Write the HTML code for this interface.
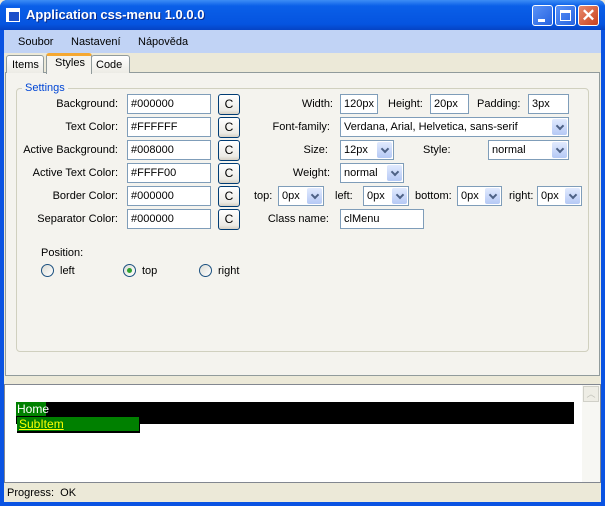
<!DOCTYPE html><html><head><style>
*{margin:0;padding:0;box-sizing:border-box}
body{width:605px;height:506px;position:relative;overflow:hidden;font-family:"Liberation Sans",Tahoma,sans-serif;font-size:11px;color:#000;background:#ece9d8}
.a{position:absolute}
.lbl{position:absolute;white-space:nowrap}
.r{text-align:right}
.in{position:absolute;height:20px;border:1px solid #7f9db9;background:#fff;padding:3px 0 0 3px;white-space:nowrap}
.btn{position:absolute;width:22px;height:21px;border:1px solid #003c74;border-radius:3px;background:linear-gradient(#fff,#ecebe6 80%,#d6d0c5);text-align:center;line-height:19px;font-size:12px}
.sel{position:absolute;height:20px;border:1px solid #7f9db9;background:#fff;padding:3px 0 0 3px;white-space:nowrap}
.sel:after{content:"";position:absolute;right:1px;top:1px;width:15px;height:16px;background:linear-gradient(#e1eafe,#b5c9f5);border-radius:2px}
.sel i{position:absolute;right:5px;top:5px;width:6px;height:6px;border-right:2px solid #4d6185;border-bottom:2px solid #4d6185;transform:rotate(45deg);z-index:2}
.rad{position:absolute;width:13px;height:13px;border:1px solid #1c5180;border-radius:50%;background:linear-gradient(135deg,#dcdcd5,#fff)}
</style></head><body>
<div class="a" style="left:0;top:0;width:605px;height:506px;background:#0a53e2;border-radius:7px 7px 0 0"></div>
<div class="a" style="left:0;top:0;width:605px;height:30px;border-radius:7px 7px 0 0;background:linear-gradient(#3d8df5,#0a5fe8 20%,#0554e0 80%,#0543c4)"></div>
<div class="a" style="left:6px;top:8px;width:14px;height:14px;background:#fff;border:1px solid #fff"><div class="a" style="left:2px;top:3px;width:10px;height:9px;background:#1c4fc9"></div><div class="a" style="left:0;top:3px;width:2px;height:9px;background:#fff"></div></div>
<div class="lbl" style="left:26px;top:7px;color:#fff;font-weight:bold;font-size:13px;text-shadow:1px 1px #0a2a8a">Application css-menu 1.0.0.0</div>
<div class="a" style="left:532px;top:5px;width:21px;height:21px;border:1px solid #fff;border-radius:3px;background:linear-gradient(135deg,#5a92f7,#2663e0)"><div class="a" style="left:5px;top:13px;width:7px;height:3px;background:#fff"></div></div>
<div class="a" style="left:555px;top:5px;width:21px;height:21px;border:1px solid #fff;border-radius:3px;background:linear-gradient(135deg,#5a92f7,#2663e0)"><div class="a" style="left:4px;top:4px;width:11px;height:11px;border:1px solid #fff;border-top-width:3px"></div></div>
<div class="a" style="left:578px;top:5px;width:21px;height:21px;border:1px solid #fff;border-radius:3px;background:linear-gradient(135deg,#e88a6d,#c9411d);color:#fff;font-size:17px;font-weight:bold;text-align:center;line-height:19px">✕</div>
<div class="a" style="left:4px;top:30px;width:597px;height:472px;background:#ece9d8"></div>
<div class="a" style="left:4px;top:30px;width:597px;height:23px;background:#c1d3f5"></div>
<div class="lbl" style="left:18px;top:36px">Soubor</div>
<div class="lbl" style="left:71px;top:36px">Nastavení</div>
<div class="lbl" style="left:138px;top:36px">Nápověda</div>
<!-- tab panel -->
<div class="a" style="left:5px;top:72px;width:595px;height:304px;background:#f4f3ee;border:1px solid #919b9c"></div>
<div class="a" style="left:6px;top:55px;width:38px;height:18px;border:1px solid #919b9c;border-bottom:none;background:linear-gradient(#fff,#ecebe5);border-radius:3px 3px 0 0"></div>
<div class="lbl" style="left:12px;top:59px">Items</div>
<div class="a" style="left:91px;top:55px;width:39px;height:18px;border:1px solid #919b9c;border-bottom:none;background:linear-gradient(#fff,#ecebe5);border-radius:3px 3px 0 0"></div>
<div class="lbl" style="left:96px;top:59px">Code</div>
<div class="a" style="left:46px;top:53px;width:46px;height:21px;border:1px solid #919b9c;border-bottom:none;border-top:3px solid #f5a831;background:#f4f3ee;border-radius:3px 3px 0 0"></div>
<div class="lbl" style="left:55px;top:57px">Styles</div>
<!-- groupbox -->
<div class="a" style="left:16px;top:88px;width:573px;height:264px;border:1px solid #d0d0bf;border-radius:4px"></div>
<div class="lbl" style="left:22px;top:82px;color:#0046d5;background:#f4f3ee;padding:0 3px">Settings</div>
<div class="lbl r" style="left:0;width:118px;top:98px">Background:</div>
<div class="lbl r" style="left:0;width:118px;top:121px">Text Color:</div>
<div class="lbl r" style="left:0;width:118px;top:144px">Active Background:</div>
<div class="lbl r" style="left:0;width:118px;top:167px">Active Text Color:</div>
<div class="lbl r" style="left:0;width:118px;top:190px">Border Color:</div>
<div class="lbl r" style="left:0;width:118px;top:213px">Separator Color:</div>
<div class="in" style="left:127px;top:94px;width:84px">#000000</div>
<div class="in" style="left:127px;top:117px;width:84px">#FFFFFF</div>
<div class="in" style="left:127px;top:140px;width:84px">#008000</div>
<div class="in" style="left:127px;top:163px;width:84px">#FFFF00</div>
<div class="in" style="left:127px;top:186px;width:84px">#000000</div>
<div class="in" style="left:127px;top:209px;width:84px">#000000</div>
<div class="btn" style="left:218px;top:94px">C</div>
<div class="btn" style="left:218px;top:117px">C</div>
<div class="btn" style="left:218px;top:140px">C</div>
<div class="btn" style="left:218px;top:163px">C</div>
<div class="btn" style="left:218px;top:186px">C</div>
<div class="btn" style="left:218px;top:209px">C</div>
<div class="lbl r" style="left:200px;width:133px;top:98px">Width:</div>
<div class="in" style="left:340px;top:94px;width:38px">120px</div>
<div class="lbl" style="left:388px;top:98px">Height:</div>
<div class="in" style="left:430px;top:94px;width:39px">20px</div>
<div class="lbl" style="left:477px;top:98px">Padding:</div>
<div class="in" style="left:528px;top:94px;width:41px">3px</div>
<div class="lbl r" style="left:200px;width:130px;top:121px">Font-family:</div>
<div class="sel" style="left:340px;top:117px;width:229px">Verdana, Arial, Helvetica, sans-serif<i></i></div>
<div class="lbl r" style="left:200px;width:128px;top:144px">Size:</div>
<div class="sel" style="left:340px;top:140px;width:54px">12px<i></i></div>
<div class="lbl" style="left:423px;top:144px">Style:</div>
<div class="sel" style="left:488px;top:140px;width:81px">normal<i></i></div>
<div class="lbl r" style="left:200px;width:130px;top:167px">Weight:</div>
<div class="sel" style="left:340px;top:163px;width:64px">normal<i></i></div>
<div class="lbl" style="left:254px;top:190px">top:</div>
<div class="sel" style="left:278px;top:186px;width:46px">0px<i></i></div>
<div class="lbl" style="left:335px;top:190px">left:</div>
<div class="sel" style="left:363px;top:186px;width:46px">0px<i></i></div>
<div class="lbl" style="left:415px;top:190px">bottom:</div>
<div class="sel" style="left:457px;top:186px;width:45px">0px<i></i></div>
<div class="lbl" style="left:509px;top:190px">right:</div>
<div class="sel" style="left:537px;top:186px;width:45px">0px<i></i></div>
<div class="lbl r" style="left:200px;width:129px;top:213px">Class name:</div>
<div class="in" style="left:340px;top:209px;width:84px">clMenu</div>
<div class="lbl" style="left:41px;top:247px">Position:</div>
<div class="rad" style="left:41px;top:264px"></div><div class="lbl" style="left:60px;top:265px">left</div>
<div class="rad" style="left:123px;top:264px"><div class="a" style="left:3px;top:3px;width:5px;height:5px;border-radius:50%;background:#2fa12f"></div></div><div class="lbl" style="left:142px;top:265px">top</div>
<div class="rad" style="left:199px;top:264px"></div><div class="lbl" style="left:218px;top:265px">right</div>
<!-- preview -->
<div class="a" style="left:4px;top:384px;width:597px;height:99px;background:#fff;border:1px solid #828790"></div>
<div class="a" style="left:582px;top:385px;width:18px;height:97px;background:#f7f7f3"><div class="a" style="left:1px;top:1px;width:16px;height:16px;border:1px solid #d0d0c8;background:#eeede5;color:#c0c0b8;font-size:9px;text-align:center;line-height:14px">︿</div></div>
<div class="a" style="left:16px;top:402px;width:558px;height:22px;background:#000"></div>
<div class="a" style="left:16px;top:402px;width:30px;height:14px;background:#008000;color:#fff;font-size:12px;line-height:15px;padding-left:1px">Home</div>
<div class="a" style="left:17px;top:417px;width:123px;height:16px;background:#008000;border-right:1px solid #000;border-bottom:2px solid #000;color:#ff0;text-decoration:underline;font-size:12px;line-height:14px;padding-left:2px">SubItem</div>
<div class="lbl" style="left:7px;top:487px">Progress:&nbsp; OK</div>
</body></html>
